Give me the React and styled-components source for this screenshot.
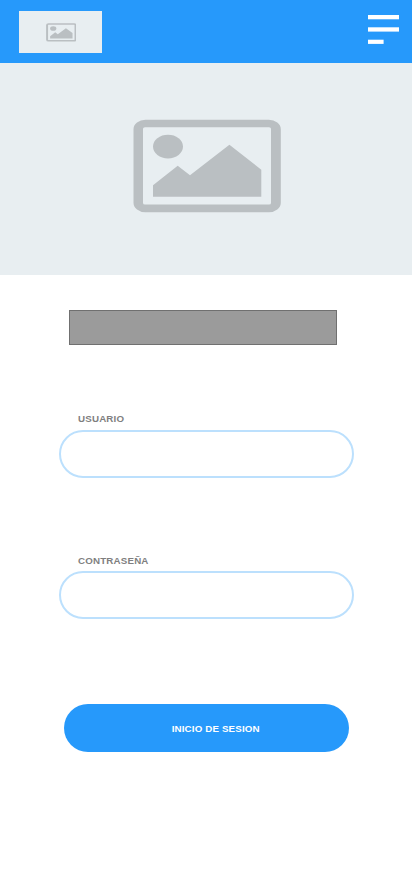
import React from "react";
import styled, { createGlobalStyle } from "styled-components";

const GlobalStyle = createGlobalStyle`
  * { box-sizing: border-box; }
  body {
    margin: 0;
    background: #ffffff;
    font-family: "Liberation Sans", Arial, sans-serif;
  }
`;

const Page = styled.main`
  display: flex;
  flex-direction: column;
  width: 412px;
  height: 870px;
  overflow: hidden;
  background: #ffffff;
`;

const TopBar = styled.header`
  display: flex;
  flex: none;
  justify-content: space-between;
  align-items: flex-start;
  height: 63px;
  padding: 11px 13px 0 19px;
  background: #2699fb;
`;

const Logo = styled.div`
  display: flex;
  width: 83px;
  height: 42px;
  padding: 12px 0 0 26.5px;
  background: #e8eef1;
`;

const MenuButton = styled.button`
  display: flex;
  margin: 4px 0 0;
  padding: 0;
  border: 0;
  background: none;
`;

const Hero = styled.section`
  display: flex;
  flex: none;
  height: 212px;
  padding: 56px 0 0 133px;
  background: #e8eef1;
`;

const Picture = styled.svg`
  display: block;
  flex: none;
  width: ${(p) => p.$width}px;
  height: ${(p) => p.$height}px;
  fill: #babfc2;
`;

const TitleBlock = styled.div`
  flex: none;
  width: 268px;
  height: 35px;
  margin: 35px 0 0 69px;
  border: 1px solid #707070;
  background: #9b9b9b;
`;

const Form = styled.form`
  display: flex;
  flex-direction: column;
  padding: 67px 58px 0 59px;
`;

const Field = styled.div`
  display: flex;
  flex-direction: column;
  margin-bottom: ${(p) => p.$gap}px;
`;

const Label = styled.label`
  height: ${(p) => p.$height}px;
  padding-left: 19px;
  color: #7f7f7f;
  font-size: 9.75px;
  font-weight: 700;
  letter-spacing: 0.18px;
  line-height: 14px;
`;

const Input = styled.input`
  width: 295px;
  height: 48px;
  padding: 0 19px;
  border: 2px solid #bce0fd;
  border-radius: 24px;
  outline: none;
  background: #ffffff;
  font: inherit;
`;

const SubmitButton = styled.button`
  width: 285px;
  height: 48px;
  margin-left: 5px;
  padding: 2px 0 0 107.7px;
  border: 0;
  border-radius: 24px;
  background: #2699fb;
  color: #ffffff;
  font: 700 9.75px/14px "Liberation Sans", Arial, sans-serif;
  letter-spacing: 0.15px;
  text-align: left;
`;

function PictureIcon({ width, height }) {
  return (
    <Picture
      $width={width}
      $height={height}
      viewBox="0 0 148 94"
      preserveAspectRatio="none"
      aria-hidden="true"
    >
      <path
        fillRule="evenodd"
        d="M12.5 .8H135.8A12 9.5 0 0 1 147.8 10.3V83.7A12 9.5 0 0 1 135.8 93.2H12.5A12 9.5 0 0 1 .5 83.7V10.3A12 9.5 0 0 1 12.5 .8ZM12 8.2Q10 8.2 10 9.7V84Q10 85.5 12 85.5H136Q138 85.5 138 84V9.7Q138 8.2 136 8.2Z"
      />
      <ellipse cx="35" cy="27.6" rx="15" ry="11.8" />
      <path d="M20 66.2L44.7 46.8L57 56.2L96.4 25.8L128.3 50.7V77.8H20Z" />
    </Picture>
  );
}

function MenuIcon() {
  return (
    <svg width="31" height="30" viewBox="0 0 31 30" fill="#ffffff" aria-hidden="true">
      <rect width="31" height="4.3" />
      <rect y="12.3" width="31" height="4.3" />
      <rect y="24.7" width="15.6" height="4.2" />
    </svg>
  );
}

export default function App() {
  return (
    <>
      <GlobalStyle />
      <Page>
        <TopBar>
          <Logo>
            <PictureIcon width={30.6} height={18.7} />
          </Logo>
          <MenuButton type="button">
            <MenuIcon />
          </MenuButton>
        </TopBar>
        <Hero>
          <PictureIcon width={148} height={94} />
        </Hero>
        <TitleBlock />
        <Form onSubmit={(event) => event.preventDefault()}>
          <Field $gap={76}>
            <Label $height={18} htmlFor="usuario">USUARIO</Label>
            <Input id="usuario" type="text" />
          </Field>
          <Field $gap={85}>
            <Label $height={17} htmlFor="contrasena">CONTRASEÑA</Label>
            <Input id="contrasena" type="password" />
          </Field>
          <SubmitButton type="submit">INICIO DE SESION</SubmitButton>
        </Form>
      </Page>
    </>
  );
}
